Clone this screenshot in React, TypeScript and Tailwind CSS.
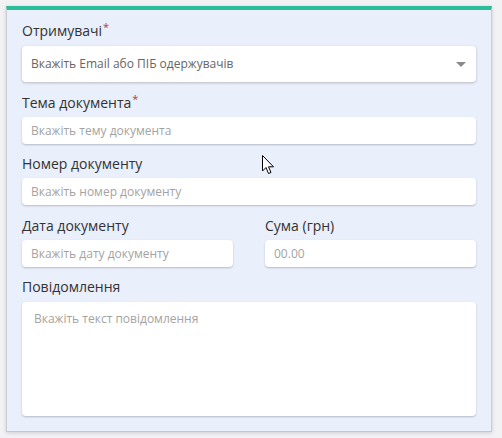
import React from "react";

function Label({ text, required }: { text: string; required?: boolean }) {
  return (
    <label className="block h-5 text-[14px] leading-5 text-[#333]">
      {text}
      {required && (
        <sup className="ml-[1px] text-[11px] text-[#c0392b]">*</sup>
      )}
    </label>
  );
}

const inputCls =
  "mt-1 block h-[27px] w-full rounded-[4px] bg-white pl-[9px] text-[12px] text-[#555] shadow-[0_1px_2px_rgba(0,0,0,0.22)] outline-none placeholder:text-[#a3a3a3]";

export default function App() {
  return (
    <div
      className="relative h-[438px] w-[502px] overflow-hidden bg-[#f2f2f4] pl-[6px] pr-[10px] pt-[6px]"
      style={{ fontFamily: '"Open Sans", "Liberation Sans", sans-serif' }}
    >
      <div className="h-[426px] border-x border-b border-t-4 border-x-[#c9ccd3] border-b-[#c4c7ce] border-t-[#2bbd9a] bg-[#e9effb] px-[15px] pt-[11px] shadow-[0_1px_4px_rgba(0,0,0,0.15)]">
        {/* Recipients */}
        <Label text="Отримувачі" required />
        <div className="mt-[5px] flex h-9 items-center justify-between rounded-[4px] bg-white pl-[9px] pr-[10px] shadow-[0_1px_3px_rgba(0,0,0,0.22)]">
          <span className="text-[12px] text-[#666]">
            Вкажіть Email або ПІБ одержувачів
          </span>
          <svg width="10" height="5" viewBox="0 0 10 5">
            <path d="M0 0 L10 0 L5 5 Z" fill="#8a8a8a" />
          </svg>
        </div>

        {/* Subject */}
        <div className="mt-[11px]">
          <Label text="Тема документа" required />
          <input className={inputCls} placeholder="Вкажіть тему документа" />
        </div>

        {/* Number */}
        <div className="mt-[10px]">
          <Label text="Номер документу" />
          <input className={inputCls} placeholder="Вкажіть номер документу" />
        </div>

        {/* Date + sum */}
        <div className="mt-[11px] grid grid-cols-2 gap-8">
          <div>
            <Label text="Дата документу" />
            <input className={inputCls} placeholder="Вкажіть дату документу" />
          </div>
          <div>
            <Label text="Сума (грн)" />
            <input className={inputCls} placeholder="00.00" />
          </div>
        </div>

        {/* Message */}
        <div className="mt-[10px]">
          <Label text="Повідомлення" />
          <textarea
            className="mt-[5px] block h-[114px] w-full resize-none rounded-[4px] bg-white px-3 pt-[8px] text-[12px] text-[#555] shadow-[0_1px_2px_rgba(0,0,0,0.22)] outline-none placeholder:text-[#a3a3a3]"
            placeholder="Вкажіть текст повідомлення"
          />
        </div>
      </div>

      {/* mouse cursor */}
      <svg
        className="absolute left-[262px] top-[155px]"
        width="13"
        height="20"
        viewBox="0 0 13 20"
      >
        <path
          d="M0.5 0.5 L0.5 16 L4 12.5 L6.5 18.5 L9 17.5 L6.5 11.8 L11.5 11.8 Z"
          fill="#fff"
          stroke="#000"
          strokeWidth="1"
          strokeLinejoin="round"
        />
      </svg>
    </div>
  );
}
